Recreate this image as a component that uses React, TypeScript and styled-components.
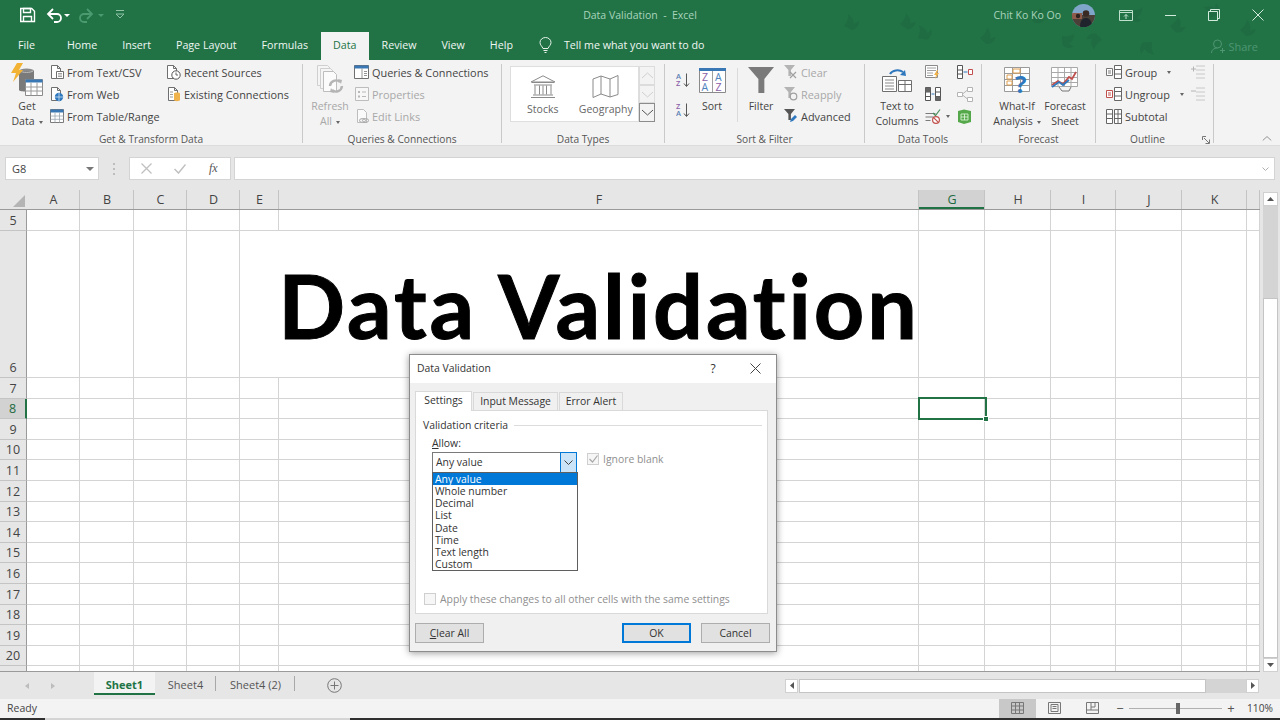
import React from "react";
import styled, { createGlobalStyle } from "styled-components";

const UI = `"Open Sans", "Noto Sans", "Liberation Sans", sans-serif`;
const GREEN = "#217346";
const COLS = "27px 53px 54px 53px 53px 39px 640px 66px 66px 65px 66px 65px 13px";

const Global = createGlobalStyle`
  html, body { margin: 0; padding: 0; background: #fff; }
  * { box-sizing: border-box; }
`;

// --- shell ---
const Page = styled.div`
  position: relative;
  width: 1280px;
  height: 720px;
  overflow: hidden;
  display: flex;
  flex-direction: column;
  font-family: ${UI};
  font-size: 10.5px;
  color: #444;
  background: #e6e6e6;
`;

const Ico = styled.svg`
  display: block;
  flex-shrink: 0;
`;

// --- title bar ---
const Head = styled.header`
  position: relative;
  background: ${GREEN};
  height: 60px;
  flex-shrink: 0;
`;

const TitleBar = styled.div`
  position: relative;
  display: flex;
  align-items: center;
  height: 30px;
  margin-bottom: 2px;
`;

const TitleSide = styled.div<{ $right?: boolean }>`
  flex: 1 1 0;
  display: flex;
  align-items: center;
  justify-content: ${p => (p.$right ? "flex-end" : "flex-start")};
`;

const QuickAccess = styled.div`
  display: flex;
  align-items: center;
  padding-left: 20px;
`;

const TitleText = styled.div`
  color: #a9d4bc;
  font-size: 10.5px;
  white-space: pre;
`;

const UserName = styled.div`
  color: #a9d4bc;
  font-size: 10.5px;
  margin-right: 11px;
`;

const WinButton = styled.div<{ $ml?: number }>`
  width: 44px;
  margin-left: ${p => p.$ml ?? 0}px;
  display: flex;
  justify-content: center;
`;

const Leaves = styled.svg`
  position: absolute;
  right: 0;
  top: 0;
`;

// --- tabs ---
const TabRow = styled.nav`
  position: relative;
  display: flex;
  align-items: stretch;
  height: 28px;
  padding-left: 5.5px;
`;

const Tab = styled.div<{ $active?: boolean; $gap?: number }>`
  display: flex;
  align-items: center;
  padding: 0 12.5px 2px;
  margin-left: ${p => p.$gap ?? 0}px;
  font-size: 10.7px;
  color: ${p => (p.$active ? GREEN : "#f0f6f2")};
  background: ${p => (p.$active ? "#f3f3f3" : "transparent")};
`;

const TellMe = styled.div`
  display: flex;
  align-items: center;
  gap: 12px;
  margin-left: 13.5px;
  padding-bottom: 2px;
  font-size: 10.7px;
  color: #f0f6f2;
`;

const Share = styled.div`
  position: absolute;
  right: 22px;
  top: 7px;
  display: flex;
  align-items: center;
  gap: 3px;
  font-size: 11px;
  color: #4f9672;
`;

// --- ribbon ---
const Ribbon = styled.section`
  position: relative;
  display: flex;
  height: 86px;
  flex-shrink: 0;
  background: #f3f3f3;
  border-bottom: 1px solid #dcdcdc;
`;

const Group = styled.div<{ $w: number }>`
  position: relative;
  width: ${p => p.$w}px;
  height: 79px;
  margin-top: 4px;
  flex-shrink: 0;
  display: flex;
  flex-direction: column;
  border-right: 1px solid #c9c9c9;
`;

const GroupBody = styled.div<{ $pad?: number }>`
  display: flex;
  height: 66px;
  flex-shrink: 0;
  margin-top: -2px;
  padding-left: ${p => p.$pad ?? 0}px;
`;

const GroupLabel = styled.div<{ $pr?: number }>`
  flex-shrink: 0;
  text-align: center;
  font-size: 10.2px;
  line-height: 14px;
  margin-top: 4px;
  padding-right: ${p => p.$pr ?? 0}px;
  color: #555;
`;

const Large = styled.div<{ $w: number; $off?: boolean }>`
  width: ${p => p.$w}px;
  flex-shrink: 0;
  display: flex;
  flex-direction: column;
  align-items: center;
  color: ${p => (p.$off ? "#a8a8a8" : "#444")};
  font-size: 10.5px;
  line-height: 15px;
  white-space: nowrap;
`;

const LargeIcon = styled.div`
  height: 37px;
  flex-shrink: 0;
  padding-bottom: 1px;
  display: flex;
  align-items: center;
  justify-content: center;
`;

const Caret = styled.span<{ $ml?: number }>`
  display: inline-block;
  width: 0;
  height: 0;
  margin-left: ${p => p.$ml ?? 4}px;
  vertical-align: middle;
  border-left: 2.5px solid transparent;
  border-right: 2.5px solid transparent;
  border-top: 3px solid #666;
`;

const SmallCol = styled.div<{ $w?: number; $ml?: number }>`
  display: flex;
  flex-direction: column;
  width: ${p => (p.$w ? `${p.$w}px` : "auto")};
  margin: -1px 0 0 ${p => p.$ml ?? 0}px;
  flex-shrink: 0;
`;

const SmallBtn = styled.div<{ $off?: boolean; $h?: number }>`
  display: flex;
  align-items: center;
  gap: 3px;
  height: ${p => p.$h ?? 22}px;
  flex-shrink: 0;
  white-space: nowrap;
  font-size: 10.9px;
  color: ${p => (p.$off ? "#a8a8a8" : "#444")};
`;

const IconSlot = styled.div`
  width: 14px;
  display: flex;
  justify-content: flex-end;
  flex-shrink: 0;
`;

const Gallery = styled.div`
  display: flex;
  margin: 4px 0 0 8px;
  height: 56px;
`;

const GalleryBox = styled.div`
  display: flex;
  width: 129px;
  padding: 8px 0 0 1px;
  background: #fff;
  border: 1px solid #dedede;
`;

const GalleryItem = styled.div<{ $w: number }>`
  width: ${p => p.$w}px;
  display: flex;
  flex-direction: column;
  align-items: center;
  gap: 3px;
  font-size: 10.5px;
  color: #666;
`;

const GalleryScroll = styled.div`
  width: 16px;
  display: flex;
  flex-direction: column;
`;

const ScrollBtn = styled.div<{ $off?: boolean }>`
  flex: 1;
  display: flex;
  align-items: center;
  justify-content: center;
  border: 1px solid ${p => (p.$off ? "#dcdcdc" : "#8c8c8c")};
`;

const VRule = styled.div<{ $ml: number }>`
  width: 1px;
  height: 54px;
  margin: 6px 0 0 ${p => p.$ml}px;
  background: #dadada;
  flex-shrink: 0;
`;

const Launcher = styled.div`
  position: absolute;
  right: 3px;
  bottom: -1px;
`;

const Collapse = styled.div`
  position: absolute;
  right: 8px;
  bottom: 3px;
`;

// --- formula bar ---
const FormulaBar = styled.div`
  display: flex;
  align-items: flex-start;
  height: 44px;
  padding: 11px 5px 0;
  flex-shrink: 0;
  background: #e6e6e6;
`;

const FieldBox = styled.div<{ $w?: number; $ml?: number }>`
  display: flex;
  align-items: center;
  height: 23px;
  margin-left: ${p => p.$ml ?? 0}px;
  background: #fff;
  border: 1px solid #d4d4d4;
  flex: ${p => (p.$w ? `0 0 ${p.$w}px` : "1 1 auto")};
`;

const NameText = styled.div`
  flex: 1;
  padding-left: 6px;
  font-size: 11px;
`;

const NameArrow = styled(Ico)`
  margin-right: 4px;
`;

const InputGrow = styled.div`
  flex: 1;
`;

const InputArrow = styled(Ico)`
  margin-right: 5px;
`;

const Grip = styled.div`
  width: 30px;
  height: 23px;
  display: flex;
  align-items: center;
  justify-content: center;
`;

const FxSlot = styled.div`
  flex: 1;
  display: flex;
  justify-content: center;
`;

const FxText = styled.i`
  font-family: "Liberation Serif", serif;
  font-size: 12px;
  color: #555;
`;

// --- sheet ---
const SheetArea = styled.div`
  position: relative;
  flex: 1;
  display: flex;
  min-height: 0;
  background: #e6e6e6;
`;

const GridWrap = styled.div`
  width: 1260px;
  height: 482px;
  overflow: hidden;
  border-bottom: 1px solid #9a9a9a;
`;

const HeaderRow = styled.div`
  display: grid;
  grid-template-columns: ${COLS};
  height: 20px;
  border-bottom: 1px solid #9a9a9a;
`;

const Corner = styled.div`
  display: flex;
  align-items: flex-end;
  justify-content: flex-end;
  padding: 0 2px 2px 0;
`;

const ColHead = styled.div<{ $active?: boolean }>`
  display: flex;
  align-items: center;
  justify-content: center;
  padding-left: 1px;
  font-size: 12.5px;
  color: ${p => (p.$active ? "#1d6a41" : "#444")};
  background: ${p => (p.$active ? "#d2d2d2" : "#e6e6e6")};
  border-right: 1px solid #c4c4c4;
  box-shadow: ${p => (p.$active ? `inset 0 -2px 0 ${GREEN}` : "none")};
`;

const Row = styled.div<{ $h: number }>`
  display: grid;
  grid-template-columns: ${COLS};
  height: ${p => p.$h}px;
`;

const RowHead = styled.div<{ $active?: boolean }>`
  display: flex;
  align-items: flex-end;
  justify-content: center;
  font-size: 12.5px;
  line-height: 18px;
  color: ${p => (p.$active ? "#1d6a41" : "#444")};
  background: ${p => (p.$active ? "#d2d2d2" : "#e6e6e6")};
  border-right: ${p => (p.$active ? `2px solid ${GREEN}` : "1px solid #9a9a9a")};
  border-bottom: 1px solid #c4c4c4;
`;

const Cell = styled.div<{ $span?: number }>`
  background: #fff;
  border-right: 1px solid #d4d4d4;
  border-bottom: 1px solid #d4d4d4;
  grid-column: ${p => (p.$span ? `span ${p.$span}` : "auto")};
`;

const BigCell = styled(Cell)`
  display: flex;
  align-items: flex-end;
  justify-content: center;
  padding: 0 0 28px 40px;
  font-family: Lato, "Open Sans", sans-serif;
  font-weight: 700;
  font-size: 88px;
  line-height: 88px;
  letter-spacing: 2.9px;
  font-variant-ligatures: none;
  -webkit-text-stroke: 1px #000;
  color: #000;
  white-space: nowrap;
`;

const Selection = styled.div`
  position: absolute;
  left: 918px;
  top: 207px;
  width: 69px;
  height: 23px;
  border: 2px solid ${GREEN};
`;

const FillHandle = styled.div`
  position: absolute;
  right: -4px;
  bottom: -4px;
  width: 6px;
  height: 6px;
  background: ${GREEN};
  border: 1px solid #fff;
`;

const VScroll = styled.div`
  display: flex;
  flex-direction: column;
  width: 15px;
  height: 480px;
  margin: 2px 0 0 3px;
`;

const ArrowBox = styled.div`
  height: 14px;
  flex-shrink: 0;
  display: flex;
  align-items: center;
  justify-content: center;
  background: #fff;
  border: 1px solid #d0d0d0;
`;

const VTrack = styled.div`
  height: 92px;
  background: #d4d4d4;
`;

const VThumb = styled.div`
  flex: 1;
  background: #fff;
  border: 1px solid #c4c4c4;
`;

// --- sheet tabs ---
const SheetBar = styled.div`
  display: flex;
  align-items: stretch;
  height: 27px;
  flex-shrink: 0;
  background: #e6e6e6;
`;

const SheetNav = styled.div`
  width: 94px;
  display: flex;
  align-items: center;
  gap: 22px;
  padding-left: 25px;
`;

const NavArrow = styled.span<{ $left?: boolean }>`
  width: 0;
  height: 0;
  border-top: 3.5px solid transparent;
  border-bottom: 3.5px solid transparent;
  ${p => (p.$left ? "border-right" : "border-left")}: 4px solid #bcbcbc;
`;

const SheetTab = styled.div<{ $w: number; $active?: boolean; $sep?: boolean }>`
  position: relative;
  width: ${p => p.$w}px;
  margin-bottom: 4px;
  padding-top: 2px;
  display: flex;
  align-items: center;
  justify-content: center;
  font-size: 11px;
  font-weight: ${p => (p.$active ? 700 : 400)};
  color: ${p => (p.$active ? GREEN : "#555")};
  background: ${p => (p.$active ? "#f3f3f3" : "transparent")};
  box-shadow: ${p => (p.$active ? `inset 0 -2px 0 ${GREEN}` : "none")};
  &::after {
    content: ${p => (p.$sep ? '""' : "none")};
    position: absolute;
    right: 0;
    top: 4px;
    height: 15px;
    width: 1px;
    background: #a8a8a8;
  }
`;

const AddSheet = styled.div`
  display: flex;
  align-items: center;
  margin-left: 32px;
`;

const HScroll = styled.div`
  display: flex;
  align-items: center;
  position: relative;
  margin-left: auto;
  margin-right: 21px;
  width: 474px;
`;

const HBox = styled.div`
  width: 13px;
  height: 14px;
  display: flex;
  align-items: center;
  justify-content: center;
  background: #fff;
  border: 1px solid #d0d0d0;
`;

const HThumb = styled.div`
  width: 407px;
  height: 14px;
  margin-left: 1px;
  background: #fff;
  border: 1px solid #c4c4c4;
`;

const HTrack = styled.div`
  flex: 1;
  height: 14px;
  background: #d4d4d4;
`;

// --- status bar ---
const StatusBar = styled.footer`
  display: flex;
  align-items: center;
  height: 19px;
  flex-shrink: 0;
  padding: 0 0 1px 7px;
  font-size: 10.5px;
  background: #f3f3f3;
`;

const ViewBtn = styled.div<{ $active?: boolean; $first?: boolean }>`
  width: 37.5px;
  height: 19px;
  margin-left: ${p => (p.$first ? "auto" : "0")};
  display: flex;
  align-items: center;
  justify-content: center;
  background: ${p => (p.$active ? "#c8c8c8" : "transparent")};
`;

const ZoomSlider = styled.div`
  position: relative;
  width: 93px;
  height: 1px;
  margin: 0 4px;
  background: #b0b0b0;
`;

const ZoomThumb = styled.div`
  position: absolute;
  left: 47px;
  top: -5px;
  width: 4px;
  height: 11px;
  background: #666;
`;

const ZoomSign = styled.div<{ $ml?: number }>`
  width: 10px;
  margin-left: ${p => p.$ml ?? 0}px;
  text-align: center;
  font-size: 13px;
  line-height: 13px;
  color: #555;
`;

const ZoomValue = styled.div`
  width: 44px;
  padding-left: 11px;
  font-size: 10.2px;
`;

const ScreenEdge = styled.div`
  display: flex;
  height: 2px;
  flex-shrink: 0;
  background: #2f2f2f;
`;

const EdgeLight = styled.div`
  width: 305px;
  margin-left: 45px;
  background: #d4d4d4;
`;

// --- dialog ---
const Dialog = styled.div`
  position: absolute;
  left: 409px;
  top: 354px;
  width: 368px;
  height: 298px;
  display: flex;
  flex-direction: column;
  background: #f0f0f0;
  border: 1px solid #8c8c8c;
  box-shadow: 0 1px 7px rgba(0, 0, 0, 0.4);
  font-size: 10.4px;
  color: #333;
`;

const DialogTitle = styled.div`
  display: flex;
  align-items: center;
  height: 28px;
  padding: 0 0 2px 7px;
  background: #fff;
  flex-shrink: 0;
`;

const TitleName = styled.div`
  flex: 1;
`;

const HelpMark = styled.div`
  width: 42px;
  text-align: center;
  font-size: 12px;
`;

const CloseBox = styled.div`
  width: 42px;
  display: flex;
  justify-content: center;
`;

const DlgTabs = styled.div`
  display: flex;
  align-items: flex-end;
  height: 27px;
  margin-left: 5px;
  flex-shrink: 0;
`;

const DlgTab = styled.div<{ $w: number; $active?: boolean }>`
  position: relative;
  top: ${p => (p.$active ? 1 : 0)}px;
  width: ${p => p.$w}px;
  height: ${p => (p.$active ? 20 : 18)}px;
  padding-bottom: ${p => (p.$active ? 3 : 1)}px;
  display: flex;
  align-items: center;
  justify-content: center;
  background: ${p => (p.$active ? "#fff" : "#f0f0f0")};
  border: 1px solid #d9d9d9;
  border-bottom: none;
  margin-left: ${p => (p.$active ? 0 : 1)}px;
`;

const DlgPanel = styled.div`
  margin: 0 8px 0 5px;
  height: 204px;
  padding: 7px 5px 0 7px;
  background: #fff;
  border: 1px solid #d9d9d9;
  flex-shrink: 0;
`;

const Legend = styled.div`
  display: flex;
  align-items: center;
  gap: 6px;
  line-height: 14px;
  &::after {
    content: "";
    flex: 1;
    height: 1px;
    background: #dcdcdc;
  }
`;

const AllowLabel = styled.div`
  margin: 4px 0 0 9px;
  line-height: 14px;
  & u {
    text-underline-offset: 1px;
  }
`;

const ComboRow = styled.div`
  display: flex;
  align-items: flex-start;
  margin: 2px 0 0 9px;
`;

const Combo = styled.div`
  position: relative;
  width: 145px;
  height: 21px;
  display: flex;
  align-items: center;
  padding: 0 0 1px 3px;
  background: #fff;
  border: 1px solid #7a7a7a;
`;

const ComboValue = styled.div`
  flex: 1;
`;

const ComboButton = styled.div`
  position: absolute;
  top: -1px;
  right: -1px;
  width: 17px;
  height: 21px;
  display: flex;
  align-items: center;
  justify-content: center;
  background: #cce4f7;
  border: 1px solid #0078d7;
`;

const DropList = styled.div`
  position: absolute;
  left: -1px;
  top: 19px;
  width: 146px;
  height: 99px;
  background: #fff;
  border: 1px solid #5f5f5f;
  z-index: 2;
`;

const DropItem = styled.div<{ $active?: boolean }>`
  height: 12.15px;
  line-height: 12px;
  padding-left: 2px;
  white-space: nowrap;
  color: ${p => (p.$active ? "#fff" : "#333")};
  background: ${p => (p.$active ? "#0078d7" : "transparent")};
`;

const CheckRow = styled.div<{ $mt: number; $ml: number }>`
  display: flex;
  align-items: center;
  gap: 4px;
  margin: ${p => p.$mt}px 0 0 ${p => p.$ml}px;
  color: #8f8f8f;
`;

const CheckBox = styled.div`
  width: 12px;
  height: 12px;
  border: 1px solid #cfcfcf;
  background: #f6f6f6;
  display: flex;
  align-items: center;
  justify-content: center;
`;

const ApplyRow = styled(CheckRow)`
  position: absolute;
  left: 14px;
  top: 237px;
  margin: 0;
`;

const DlgFooter = styled.div`
  display: flex;
  margin: 9px 6px 0 5px;
`;

const DlgButton = styled.div<{ $primary?: boolean; $ml?: string }>`
  width: 69px;
  height: 20px;
  display: flex;
  align-items: center;
  justify-content: center;
  margin-left: ${p => p.$ml ?? "0"};
  background: #e1e1e1;
  border: ${p => (p.$primary ? "2px solid #0078d7" : "1px solid #adadad")};
`;

// --- icons ---
type P = { c?: string };
const Doc = ({ c = "#6f6f6f" }: P) => <path d="M1.5 .5h6l3 3v10h-9zM7.5 .5v3h3" stroke={c} fill="#fff" />;

const GetDataIcon = () => (
  <Ico width="32" height="34" viewBox="0 0 32 34">
    <ellipse cx="15.500" cy="8" rx="7.500" ry="2.600" fill="#8c8c8c" />
    <path d="M8 8v19c0 2 15 2 15 0V8z" fill="#7a7a7a" />
    <path d="M9 8c2 1.800 11 1.800 13 0" stroke="#c4c4c4" fill="none" />
    <path d="M6 0h6L8 7h4L2 19l3-9H0z" fill="#f2b233" />
    <path d="M14.500 16.500h17v16h-17z" fill="#fff" stroke="#8a8a8a" />
    <path d="M14.500 16.500h17v3h-17z" fill="#3a78b5" />
    <path d="M14.500 24h17M14.500 28h17M20 19.500v13M26 19.500v13" stroke="#9a9a9a" />
  </Ico>
);

const TextDocIcon = () => (
  <Ico width="14" height="15" viewBox="0 0 14 15">
    <Doc />
    <path d="M6.500 6.500h7v7h-7z" fill="#fff" stroke="#6f6f6f" />
    <path d="M8 8.500h4M8 10h4M8 11.500h4" stroke="#8a8a8a" strokeWidth=".8" />
  </Ico>
);

const WebDocIcon = () => (
  <Ico width="14" height="15" viewBox="0 0 14 15">
    <Doc />
    <circle cx="9" cy="10" r="4.200" fill="#2f78bd" />
    <path d="M9 6v8M5 10h8" stroke="#cfe3f5" strokeWidth=".8" />
  </Ico>
);

const TableIcon = ({ head = "#3a78b5", w = 14 }: { head?: string; w?: number }) => (
  <Ico width={w} height="14" viewBox="0 0 14 14">
    <path d="M.5 .5h13v13H.5z" fill="#fff" stroke="#7a7a7a" />
    <path d="M.5 .5h13v3H.5z" fill={head} />
    <path d="M.5 7h13M.5 10.300h13M5 3.500v10M9.500 3.500v10" stroke="#9aa6b0" strokeWidth=".8" />
  </Ico>
);

const QueryIcon = () => (
  <Ico width="15" height="14" viewBox="0 0 15 14">
    <path d="M.5 .5h14v13H.5z" fill="#fff" stroke="#6f6f6f" />
    <path d="M.5 .5h14v3H.5z" fill="#3a78b5" />
    <path d="M8 3.500v10M10 6.500h3M10 8.500h3M10 10.500h3" stroke="#7a7a7a" strokeWidth=".8" />
  </Ico>
);

const RecentIcon = () => (
  <Ico width="15" height="15" viewBox="0 0 15 15">
    <Doc />
    <circle cx="10" cy="10" r="4.200" fill="#fff" stroke="#555" />
    <path d="M10 7.500V10h2" stroke="#555" strokeWidth=".9" fill="none" />
  </Ico>
);

const ExistingIcon = () => (
  <Ico width="14" height="15" viewBox="0 0 14 15">
    <Doc />
    <path d="M3 5h3M3 7.500h3M3 10h3" stroke="#999" />
    <path d="M7 6.500c0-1.500 6-1.500 6 0v6.500c0 1.500-6 1.500-6 0z" fill="#f0b24a" />
  </Ico>
);

const RefreshIcon = () => (
  <Ico width="28" height="30" viewBox="0 0 28 30">
    <path d="M1.500 .5h10l3 3v17h-13z" fill="#f5f5f5" stroke="#cfcfcf" />
    <path d="M4.500 3.500h10l3 3v17h-13z" fill="#f5f5f5" stroke="#cfcfcf" />
    <path d="M7.500 6.500h10l3 3v17h-13z" fill="#fbfbfb" stroke="#bdbdbd" />
    <path d="M14 21a6 6 0 0 1 10-4M26 21a6 6 0 0 1-10 4" stroke="#b4b4b4" strokeWidth="2.400" fill="none" />
    <path d="M22 14l4 1-1 4zM18 28l-4-1 1-4z" fill="#b4b4b4" />
  </Ico>
);

const PropsIcon = () => (
  <Ico width="14" height="14" viewBox="0 0 14 14">
    <path d="M.5 .5h13v13H.5z" fill="#f7f7f7" stroke="#bdbdbd" />
    <path d="M3 4h2v2H3zM3 8.500h2v2H3z" fill="#b8b8b8" />
    <path d="M7 5h4M7 9.500h4" stroke="#b8b8b8" />
  </Ico>
);

const LinksIcon = () => (
  <Ico width="13" height="15" viewBox="0 0 13 15">
    <path d="M1.500 .5h6l3 3v10h-9z" fill="#fafafa" stroke="#bdbdbd" />
    <ellipse cx="6.500" cy="11.500" rx="3" ry="2" fill="#f3f3f3" stroke="#a8a8a8" />
    <ellipse cx="9.500" cy="11.500" rx="3" ry="2" fill="none" stroke="#a8a8a8" />
  </Ico>
);

const BankIcon = () => (
  <Ico width="26" height="24" viewBox="0 0 26 24">
    <path d="M13 .8L25 7H1z" fill="#fff" stroke="#8a8a8a" />
    <path d="M2 7.500h22M4 10h18M5 10.500v9M9.500 10.500v9M13 10.500v9M16.500 10.500v9M21 10.500v9M3 20h20M1 22.500h24" stroke="#8a8a8a" />
  </Ico>
);

const MapIcon = () => (
  <Ico width="28" height="24" viewBox="0 0 28 24">
    <path d="M1 4l8-3 9 3 8-3.500v19L18 22l-9-3-8 3.500zM9 1v18M18 4v18" fill="#fff" stroke="#8a8a8a" />
  </Ico>
);

const SortUp = ({ a, b }: { a: string; b: string }) => (
  <Ico width="16" height="15" viewBox="0 0 16 15">
    <text x="0" y="6.500" fontFamily={UI} fontSize="7.500" fontWeight="600" fill={a === "A" ? "#5b7fb4" : "#8a5ea8"}>{a}</text>
    <text x="0" y="14" fontFamily={UI} fontSize="7.500" fontWeight="600" fill={b === "A" ? "#5b7fb4" : "#8a5ea8"}>{b}</text>
    <path d="M10.500 1.500v12.500M8 11.500l2.500 3 2.500-3" stroke="#555" fill="none" />
  </Ico>
);

const SortBigIcon = () => (
  <Ico width="27" height="25" viewBox="0 0 27 25">
    <path d="M.5 .5h26v24H.5z" fill="#fff" stroke="#8a8a8a" />
    <path d="M0 0h27v3H0z" fill="#3a78b5" />
    <path d="M13.500 3v21" stroke="#a0a0a0" />
    <text x="3" y="12.500" fontFamily={UI} fontSize="10.500" fill="#8a5ea8">Z</text>
    <text x="2.500" y="23" fontFamily={UI} fontSize="10.500" fill="#4e83bd">A</text>
    <text x="16" y="12.500" fontFamily={UI} fontSize="10.500" fill="#4e83bd">A</text>
    <text x="16.500" y="23" fontFamily={UI} fontSize="10.500" fill="#8a5ea8">Z</text>
  </Ico>
);

const Funnel = ({ fill, size = 14 }: { fill: string; size?: number }) => (
  <path d="M0 0h14L8.800 6.500V14h-3.200V6.500z" fill={fill} transform={`scale(${size / 14})`} />
);

const FilterIcon = () => (
  <Ico width="26" height="26" viewBox="0 0 26 26">
    <Funnel fill="#7a7a7a" size={26} />
  </Ico>
);

const ClearIcon = () => (
  <Ico width="14" height="14" viewBox="0 0 14 14">
    <Funnel fill="#b4b4b4" size={11} />
    <path d="M6 7l6 6M12 7l-6 6" stroke="#a0a0a0" strokeWidth="1.200" />
  </Ico>
);

const ReapplyIcon = () => (
  <Ico width="14" height="14" viewBox="0 0 14 14">
    <Funnel fill="#b4b4b4" size={11} />
    <circle cx="9.500" cy="9.500" r="3.300" fill="none" stroke="#a0a0a0" strokeWidth="1.200" />
  </Ico>
);

const AdvancedIcon = () => (
  <Ico width="14" height="14" viewBox="0 0 14 14">
    <Funnel fill="#555" size={11} />
    <path d="M6 13l1-3 4-4 2 2-4 4z" fill="#2f78bd" />
  </Ico>
);

const TextColsIcon = () => (
  <Ico width="30" height="26" viewBox="0 0 30 26">
    <path d="M.5 9.500h14v15H.5z" fill="#fff" stroke="#6f6f6f" />
    <path d="M3 13h9M3 16h9M3 19h9M3 22h9" stroke="#8a8a8a" />
    <path d="M16.500 13.500h13v11h-13zM16.500 17.500h13M23 13.500v11" fill="#fff" stroke="#6f6f6f" />
    <path d="M8 7a8 6 0 0 1 13-2" stroke="#2f78bd" strokeWidth="2" fill="none" />
    <path d="M18 8l6 1-1-6z" fill="#2f78bd" />
  </Ico>
);

const FlashIcon = () => (
  <Ico width="16" height="14" viewBox="0 0 16 14">
    <path d="M.5 .5h12v12H.5z" fill="#fff" stroke="#8a8a8a" />
    <path d="M2 3h9M2 5.500h9M2 8h6M2 10.500h6" stroke="#a0a0a0" />
    <path d="M12 5l-3 5h2l-1 4 4-6h-2l1-3z" fill="#f0b24a" />
  </Ico>
);

const DupIcon = () => (
  <Ico width="16" height="16" viewBox="0 0 16 16">
    <path d="M.5 1.500h5v13h-5zM10.500 1.500h5v13h-5zM.5 6h5M.5 10.500h5M10.500 6h5M10.500 10.500h5" stroke="#555" fill="#fff" />
    <path d="M.5 1.500h5V6h-5zM10.500 10.500h5v4h-5z" fill="#666" />
    <path d="M6.500 8h3" stroke="#2f78bd" />
  </Ico>
);

const ValidateIcon = () => (
  <Ico width="16" height="15" viewBox="0 0 16 15">
    <path d="M.5 4.500h10M.5 8h8M.5 11.500h5" stroke="#7a7a7a" />
    <path d="M8 4l2.500 2.500L15 .5" stroke="#4b8f5c" strokeWidth="1.200" fill="none" />
    <circle cx="11" cy="11" r="3.400" fill="#fff" stroke="#c0504d" strokeWidth="1.200" />
    <path d="M8.800 8.800l4.400 4.400" stroke="#c0504d" strokeWidth="1.200" />
  </Ico>
);

const ConsolidateIcon = () => (
  <Ico width="16" height="14" viewBox="0 0 16 14">
    <path d="M.5 .5h5v13h-5zM.5 5h5M.5 9h5" stroke="#555" fill="#fff" />
    <path d="M6.500 7h4" stroke="#2f78bd" />
    <path d="M11.500 4.500h4v5h-4z" fill="#fff" stroke="#c0504d" />
  </Ico>
);

const RelationIcon = () => (
  <Ico width="16" height="15" viewBox="0 0 16 15">
    <path d="M.5 5.500h5v4h-5zM10.500 .5h5v4h-5zM10.500 10.500h5v4h-5z" fill="#fff" stroke="#b4b4b4" />
    <path d="M5.500 7L10.500 3M5.500 8l5 4" stroke="#b4b4b4" />
  </Ico>
);

const ModelIcon = () => (
  <Ico width="15" height="15" viewBox="0 0 15 15">
    <path d="M1 2l6-1.500L14 2v11l-7 2-6-2z" fill="#54a84a" />
    <path d="M4 5h7v6H4zM7.500 5v6M4 8h7" stroke="#d9f0d4" strokeWidth=".9" fill="none" />
  </Ico>
);

const WhatIfIcon = () => (
  <Ico width="26" height="26" viewBox="0 0 26 26">
    <path d="M.5 .5h25v24H.5zM.5 6.500h25M.5 12.500h25M.5 18.500h25M8.500 .5v24M16.500 .5v24" fill="#fff" stroke="#9a9a9a" />
    <path d="M3 8h5v4H3zM3 14h5v4H3zM9 2h7v4H9z" fill="none" stroke="#e0a050" />
    <text x="11" y="26" fontFamily={UI} fontSize="24" fontWeight="700" fill="#2f78bd">?</text>
  </Ico>
);

const ForecastIcon = () => (
  <Ico width="28" height="26" viewBox="0 0 28 26">
    <path d="M.5 .5h26v19H.5zM.5 5.500h26M.5 10.500h26M.5 15.500h26M7 .5v19M13.500 .5v19M20 .5v19" fill="#fff" stroke="#a8a8a8" />
    <path d="M1 18l6-4 5 3 6-7 3 2 4-7" stroke="#c0504d" strokeWidth="1.800" fill="none" />
    <path d="M1 20l7-5 4 3 6-5" stroke="#2f78bd" strokeWidth="1.800" fill="none" />
    <path d="M8 20l3 4h7l2-4" stroke="#777" fill="none" />
  </Ico>
);

const GroupIcon = ({ accent = "#777" }: { accent?: string }) => (
  <Ico width="16" height="14" viewBox="0 0 16 14">
    <path d="M.5 3.500h6v7h-6z" fill="#fff" stroke={accent} />
    <path d="M2 6h3M2 8h3" stroke={accent} />
    <path d="M8.500 .5h7v13h-7zM8.500 4.500h7M8.500 9h7" fill="#fff" stroke="#666" />
  </Ico>
);

const SubtotalIcon = () => (
  <Ico width="16" height="15" viewBox="0 0 16 15">
    <path d="M.5 .5h6v14h-6zM.5 5h6M.5 9.500h6M8.500 .5h7v14h-7zM8.500 5h7M8.500 9.500h7M12 .5v14" fill="#fff" stroke="#666" />
  </Ico>
);

const OutlineSide = ({ sign }: { sign: "+" | "-" }) => (
  <Ico width="16" height="14" viewBox="0 0 16 14">
    <path d="M6 1h9M6 5h9M6 9h9M6 13h9" stroke="#c8c8c8" />
    <path d={sign === "+" ? "M1 4h5M3.500 1.500v5" : "M1 4h5"} stroke="#b4b4b4" />
  </Ico>
);

const Chevron = ({ up, color = "#8a8a8a", w = 13 }: { up?: boolean; color?: string; w?: number }) => (
  <Ico width={w} height="7" viewBox="0 0 13 7">
    <path d={up ? "M1 6l5.500-5L12 6" : "M1 1l5.500 5L12 1"} stroke={color} fill="none" />
  </Ico>
);

const LEAF = "M0 0c3-4 5-8 4-12 4 3 6 6 6 10l5-3c0 5-3 8-7 9l-8-4z";
const LEAF_SPOTS: [number, number, number][] = [
  [4, 26, 0], [60, 24, 10], [78, 38, -15], [140, 38, 15], [190, 14, 40], [222, 36, 60],
  [290, 10, 60], [330, 26, 20], [370, 18, -50], [400, 30, 15], [262, 40, 200], [312, 42, 150],
];

const TitleLeaves = () => (
  <Leaves width="440" height="60" viewBox="0 0 440 60">
    {LEAF_SPOTS.map(([x, y, r]) => (
      <path key={`${x}-${y}`} d={LEAF} fill="#1f6c42" transform={`translate(${x} ${y}) rotate(${r})`} />
    ))}
  </Leaves>
);

const Avatar = () => (
  <Ico width="23" height="23" viewBox="0 0 23 23">
    <defs>
      <clipPath id="avatarClip"><circle cx="11.500" cy="11.500" r="11.500" /></clipPath>
    </defs>
    <g clipPath="url(#avatarClip)">
      <rect width="23" height="23" fill="#7fa6c9" />
      <rect y="11" width="23" height="12" fill="#4a4038" />
      <rect y="9" width="10" height="6" fill="#8e5a4a" />
      <circle cx="14" cy="9.500" r="3.300" fill="#3a2a24" />
      <path d="M8 23c0-7 3-9 6-9s6 2 6 9z" fill="#20242c" />
      <circle cx="6" cy="12" r="2.200" fill="#2c2320" />
    </g>
  </Ico>
);

// --- data ---
const COL_NAMES = ["A", "B", "C", "D", "E", "F", "G", "H", "I", "J", "K", ""];
const ROW_NUMS = [7, 8, 9, 10, 11, 12, 13, 14, 15, 16, 17, 18, 19, 20, 21];
const ALLOW = ["Any value", "Whole number", "Decimal", "List", "Date", "Time", "Text length", "Custom"];

const blankCells = (n: number) => Array.from({ length: n }, (_, i) => <Cell key={i} />);

export default function App() {
  return (
    <Page>
      <Global />
      <Head>
        <TitleLeaves />
        <TitleBar>
          <TitleSide>
            <QuickAccess>
              <Ico width="108" height="16" viewBox="0 0 108 16">
                <path d="M.7 1.500h11l2.800 2.800v10.200H.7z" fill="none" stroke="#fff" strokeWidth="1.400" />
                <path d="M3.500 1.500h7v4h-7zM3.500 14.500v-5h8v5" fill="none" stroke="#fff" strokeWidth="1.400" />
                <path d="M29 7h8a4 4 0 0 1 0 8h-3" fill="none" stroke="#fff" strokeWidth="1.800" />
                <path d="M33 2l-5 5 5 5" fill="none" stroke="#fff" strokeWidth="1.800" />
                <path d="M44 7h6l-3 3z" fill="#fff" />
                <path d="M71 7h-7a4 4 0 0 0 0 8h3" fill="none" stroke="#4b9a70" strokeWidth="1.800" />
                <path d="M67 2l5 5-5 5" fill="none" stroke="#4b9a70" strokeWidth="1.800" />
                <path d="M78 7h6l-3 3z" fill="#4b9a70" />
                <path d="M96 3.500h8M96 7l4 4 4-4z" fill="none" stroke="#8fc2a6" />
              </Ico>
            </QuickAccess>
          </TitleSide>
          <TitleText>Data Validation  -  Excel</TitleText>
          <TitleSide $right>
            <UserName>Chit Ko Ko Oo</UserName>
            <Avatar />
            <WinButton $ml={9}>
              <Ico width="14" height="11" viewBox="0 0 14 11">
                <path d="M.5 .5h13v10H.5zM.5 2.500h13M7 9V4.500M5 6.500l2-2 2 2" fill="none" stroke="#bfe0cd" />
              </Ico>
            </WinButton>
            <WinButton>
              <Ico width="11" height="1" viewBox="0 0 11 1"><path d="M0 .5h11" stroke="#d3ebdd" /></Ico>
            </WinButton>
            <WinButton>
              <Ico width="12" height="12" viewBox="0 0 12 12">
                <path d="M.5 2.500h9v9h-9zM2.500 2.500v-2h9v9h-2" fill="none" stroke="#d3ebdd" />
              </Ico>
            </WinButton>
            <WinButton>
              <Ico width="12" height="12" viewBox="0 0 12 12"><path d="M.5 .5l11 11M11.500 .5l-11 11" stroke="#d3ebdd" /></Ico>
            </WinButton>
          </TitleSide>
        </TitleBar>
        <TabRow>
          <Tab>File</Tab>
          <Tab $gap={7}>Home</Tab>
          <Tab>Insert</Tab>
          <Tab>Page Layout</Tab>
          <Tab>Formulas</Tab>
          <Tab $active>Data</Tab>
          <Tab>Review</Tab>
          <Tab>View</Tab>
          <Tab>Help</Tab>
          <TellMe>
            <Ico width="13" height="16" viewBox="0 0 13 16">
              <path d="M4 11.500C3 9 1 8 1 5.500a5.500 5 0 0 1 11 0C12 8 10 9 9 11.500zM4.500 13.500h4M5.500 15.500h2" fill="none" stroke="#e6f2ea" />
            </Ico>
            Tell me what you want to do
          </TellMe>
          <Share>
            <Ico width="14" height="15" viewBox="0 0 14 15">
              <circle cx="6.500" cy="5" r="4" fill="none" stroke="#4f9672" />
              <path d="M.5 14c0-3 2.500-5 6-5M9 11.500h5M11.500 9v5" fill="none" stroke="#4f9672" />
            </Ico>
            Share
          </Share>
        </TabRow>
      </Head>

      <Ribbon>
        <Group $w={303}>
          <GroupBody>
            <Large $w={54}>
              <LargeIcon><GetDataIcon /></LargeIcon>
              <div>Get</div>
              <div>Data<Caret /></div>
            </Large>
            <SmallCol $w={117} $ml={-4}>
              <SmallBtn><IconSlot><TextDocIcon /></IconSlot>From Text/CSV</SmallBtn>
              <SmallBtn><IconSlot><WebDocIcon /></IconSlot>From Web</SmallBtn>
              <SmallBtn><IconSlot><TableIcon /></IconSlot>From Table/Range</SmallBtn>
            </SmallCol>
            <SmallCol>
              <SmallBtn><IconSlot><RecentIcon /></IconSlot>Recent Sources</SmallBtn>
              <SmallBtn><IconSlot><ExistingIcon /></IconSlot>Existing Connections</SmallBtn>
            </SmallCol>
          </GroupBody>
          <GroupLabel>Get &amp; Transform Data</GroupLabel>
        </Group>

        <Group $w={199}>
          <GroupBody>
            <Large $w={54} $off>
              <LargeIcon><RefreshIcon /></LargeIcon>
              <div>Refresh</div>
              <div>All<Caret /></div>
            </Large>
            <SmallCol $ml={-2}>
              <SmallBtn><IconSlot><QueryIcon /></IconSlot>Queries &amp; Connections</SmallBtn>
              <SmallBtn $off><IconSlot><PropsIcon /></IconSlot>Properties</SmallBtn>
              <SmallBtn $off><IconSlot><LinksIcon /></IconSlot>Edit Links</SmallBtn>
            </SmallCol>
          </GroupBody>
          <GroupLabel>Queries &amp; Connections</GroupLabel>
        </Group>

        <Group $w={163}>
          <GroupBody>
            <Gallery>
              <GalleryBox>
                <GalleryItem $w={62}><BankIcon />Stocks</GalleryItem>
                <GalleryItem $w={65}><MapIcon />Geography</GalleryItem>
              </GalleryBox>
              <GalleryScroll>
                <ScrollBtn $off><Chevron up color="#cfcfcf" /></ScrollBtn>
                <ScrollBtn $off><Chevron color="#cfcfcf" /></ScrollBtn>
                <ScrollBtn><Chevron color="#555" /></ScrollBtn>
              </GalleryScroll>
            </Gallery>
          </GroupBody>
          <GroupLabel>Data Types</GroupLabel>
        </Group>

        <Group $w={200}>
          <GroupBody $pad={11}>
            <SmallCol $w={18}>
              <SmallBtn $h={37}><SortUp a="A" b="Z" /></SmallBtn>
              <SmallBtn><SortUp a="Z" b="A" /></SmallBtn>
            </SmallCol>
            <Large $w={36}>
              <LargeIcon><SortBigIcon /></LargeIcon>
              <div>Sort</div>
            </Large>
            <VRule $ml={7} />
            <Large $w={46}>
              <LargeIcon><FilterIcon /></LargeIcon>
              <div>Filter</div>
            </Large>
            <SmallCol>
              <SmallBtn $off><ClearIcon />Clear</SmallBtn>
              <SmallBtn $off><ReapplyIcon />Reapply</SmallBtn>
              <SmallBtn><AdvancedIcon />Advanced</SmallBtn>
            </SmallCol>
          </GroupBody>
          <GroupLabel>Sort &amp; Filter</GroupLabel>
        </Group>

        <Group $w={117}>
          <GroupBody $pad={9}>
            <Large $w={46}>
              <LargeIcon><TextColsIcon /></LargeIcon>
              <div>Text to</div>
              <div>Columns</div>
            </Large>
            <SmallCol $w={32} $ml={5}>
              <SmallBtn><FlashIcon /></SmallBtn>
              <SmallBtn><DupIcon /></SmallBtn>
              <SmallBtn><ValidateIcon /><Caret $ml={2} /></SmallBtn>
            </SmallCol>
            <SmallCol>
              <SmallBtn><ConsolidateIcon /></SmallBtn>
              <SmallBtn><RelationIcon /></SmallBtn>
              <SmallBtn><ModelIcon /></SmallBtn>
            </SmallCol>
          </GroupBody>
          <GroupLabel>Data Tools</GroupLabel>
        </Group>

        <Group $w={114}>
          <GroupBody $pad={9}>
            <Large $w={52}>
              <LargeIcon><WhatIfIcon /></LargeIcon>
              <div>What-If</div>
              <div>Analysis<Caret /></div>
            </Large>
            <Large $w={44}>
              <LargeIcon><ForecastIcon /></LargeIcon>
              <div>Forecast</div>
              <div>Sheet</div>
            </Large>
          </GroupBody>
          <GroupLabel>Forecast</GroupLabel>
        </Group>

        <Group $w={118}>
          <GroupBody $pad={10}>
            <SmallCol $w={84}>
              <SmallBtn><GroupIcon />Group<Caret $ml={7} /></SmallBtn>
              <SmallBtn><GroupIcon accent="#c0504d" />Ungroup<Caret $ml={7} /></SmallBtn>
              <SmallBtn><SubtotalIcon />Subtotal</SmallBtn>
            </SmallCol>
            <SmallCol>
              <SmallBtn><OutlineSide sign="+" /></SmallBtn>
              <SmallBtn><OutlineSide sign="-" /></SmallBtn>
            </SmallCol>
          </GroupBody>
          <GroupLabel $pr={14}>Outline</GroupLabel>
          <Launcher>
            <Ico width="8" height="8" viewBox="0 0 8 8">
              <path d="M.5 4V.5H4M2 2l5 5M3.500 7.500h4V3.500" fill="none" stroke="#777" />
            </Ico>
          </Launcher>
        </Group>
        <Collapse><Chevron up w={10} color="#777" /></Collapse>
      </Ribbon>

      <FormulaBar>
        <FieldBox $w={94}>
          <NameText>G8</NameText>
          <NameArrow width="8" height="4" viewBox="0 0 8 4"><path d="M0 0h8L4 4z" fill="#777" /></NameArrow>
        </FieldBox>
        <Grip>
          <Ico width="2" height="12" viewBox="0 0 2 12"><path d="M1 0v2M1 5v2M1 10v2" stroke="#b0b0b0" strokeWidth="1.500" /></Ico>
        </Grip>
        <FieldBox $w={102}>
          <FxSlot><Ico width="11" height="11" viewBox="0 0 11 11"><path d="M.5 .5l10 10M10.500 .5l-10 10" stroke="#c0c0c0" strokeWidth="1.300" /></Ico></FxSlot>
          <FxSlot><Ico width="12" height="10" viewBox="0 0 12 10"><path d="M.5 5l4 4 7-8.500" stroke="#c0c0c0" strokeWidth="1.500" fill="none" /></Ico></FxSlot>
          <FxSlot><FxText>fx</FxText></FxSlot>
        </FieldBox>
        <FieldBox $ml={3}>
          <InputGrow />
          <InputArrow width="7" height="4" viewBox="0 0 7 4"><path d="M.5 .5l3 3 3-3" stroke="#b0b0b0" fill="none" /></InputArrow>
        </FieldBox>
      </FormulaBar>

      <SheetArea>
        <GridWrap>
          <HeaderRow>
            <Corner>
              <Ico width="12" height="12" viewBox="0 0 12 12"><path d="M12 0v12H0z" fill="#b4b4b4" /></Ico>
            </Corner>
            {COL_NAMES.map((c, i) => <ColHead key={i} $active={c === "G"}>{c}</ColHead>)}
          </HeaderRow>
          <Row $h={21}>
            <RowHead>5</RowHead>
            {blankCells(12)}
          </Row>
          <Row $h={147}>
            <RowHead>6</RowHead>
            {blankCells(4)}
            <BigCell $span={2}>Data Validation</BigCell>
            {blankCells(6)}
          </Row>
          {ROW_NUMS.map(n => (
            <Row key={n} $h={20.6}>
              <RowHead $active={n === 8}>{n}</RowHead>
              {blankCells(12)}
            </Row>
          ))}
        </GridWrap>
        <VScroll>
          <ArrowBox><Ico width="7" height="4" viewBox="0 0 7 4"><path d="M0 4h7L3.500 0z" fill="#555" /></Ico></ArrowBox>
          <VTrack />
          <VThumb />
          <ArrowBox><Ico width="7" height="4" viewBox="0 0 7 4"><path d="M0 0h7L3.500 4z" fill="#555" /></Ico></ArrowBox>
        </VScroll>
        <Selection><FillHandle /></Selection>
      </SheetArea>

      <SheetBar>
        <SheetNav>
          <NavArrow $left />
          <NavArrow />
        </SheetNav>
        <SheetTab $w={61} $active>Sheet1</SheetTab>
        <SheetTab $w={61} $sep>Sheet4</SheetTab>
        <SheetTab $w={79} $sep>Sheet4 (2)</SheetTab>
        <AddSheet>
          <Ico width="15" height="15" viewBox="0 0 15 15">
            <circle cx="7.500" cy="7.500" r="6.800" fill="none" stroke="#777" />
            <path d="M3.500 7.500h8M7.500 3.500v8" stroke="#777" />
          </Ico>
        </AddSheet>
        <HScroll>
          <HBox><Ico width="4" height="7" viewBox="0 0 4 7"><path d="M4 0v7L0 3.500z" fill="#555" /></Ico></HBox>
          <HThumb />
          <HTrack />
          <HBox><Ico width="4" height="7" viewBox="0 0 4 7"><path d="M0 0v7l4-3.500z" fill="#555" /></Ico></HBox>
        </HScroll>
      </SheetBar>

      <StatusBar>
        Ready
        <ViewBtn $first $active>
          <Ico width="13" height="12" viewBox="0 0 13 12"><path d="M.5 .5h12v11H.5zM.5 4h12M.5 8h12M4.500 .5v11M8.500 .5v11" fill="none" stroke="#777" /></Ico>
        </ViewBtn>
        <ViewBtn>
          <Ico width="13" height="12" viewBox="0 0 13 12"><path d="M.5 .5h12v11H.5zM3 2.500h7v7H3zM4.500 4.500h4M4.500 6.500h4" fill="none" stroke="#777" /></Ico>
        </ViewBtn>
        <ViewBtn>
          <Ico width="13" height="12" viewBox="0 0 13 12"><path d="M.5 .5h12v11H.5zM.5 8h12M5 .5V8M9 .5V5H5" fill="none" stroke="#777" /></Ico>
        </ViewBtn>
        <ZoomSign $ml={4}>−</ZoomSign>
        <ZoomSlider><ZoomThumb /></ZoomSlider>
        <ZoomSign>+</ZoomSign>
        <ZoomValue>110%</ZoomValue>
      </StatusBar>
      <ScreenEdge><EdgeLight /></ScreenEdge>

      <Dialog>
        <DialogTitle>
          <TitleName>Data Validation</TitleName>
          <HelpMark>?</HelpMark>
          <CloseBox>
            <Ico width="11" height="11" viewBox="0 0 11 11"><path d="M.5 .5l10 10M10.500 .5l-10 10" stroke="#444" /></Ico>
          </CloseBox>
        </DialogTitle>
        <DlgTabs>
          <DlgTab $w={57} $active>Settings</DlgTab>
          <DlgTab $w={85}>Input Message</DlgTab>
          <DlgTab $w={64}>Error Alert</DlgTab>
        </DlgTabs>
        <DlgPanel>
          <Legend>Validation criteria</Legend>
          <AllowLabel><u>A</u>llow:</AllowLabel>
          <ComboRow>
            <Combo>
              <ComboValue>Any value</ComboValue>
              <ComboButton>
                <Ico width="9" height="5" viewBox="0 0 9 5"><path d="M.5 .5l4 4 4-4" stroke="#444" fill="none" /></Ico>
              </ComboButton>
              <DropList>
                {ALLOW.map((a, i) => <DropItem key={a} $active={i === 0}>{a}</DropItem>)}
              </DropList>
            </Combo>
            <CheckRow $mt={0} $ml={10}>
              <CheckBox>
                <Ico width="9" height="8" viewBox="0 0 9 8"><path d="M.5 4l3 3 5-6.500" stroke="#a8a8a8" strokeWidth="1.200" fill="none" /></Ico>
              </CheckBox>
              Ignore blank
            </CheckRow>
          </ComboRow>
          <ApplyRow $mt={0} $ml={0}>
            <CheckBox />
            Apply these changes to all other cells with the same settings
          </ApplyRow>
        </DlgPanel>
        <DlgFooter>
          <DlgButton><span><u>C</u>lear All</span></DlgButton>
          <DlgButton $primary $ml="auto">OK</DlgButton>
          <DlgButton $ml="10px">Cancel</DlgButton>
        </DlgFooter>
      </Dialog>
    </Page>
  );
}
